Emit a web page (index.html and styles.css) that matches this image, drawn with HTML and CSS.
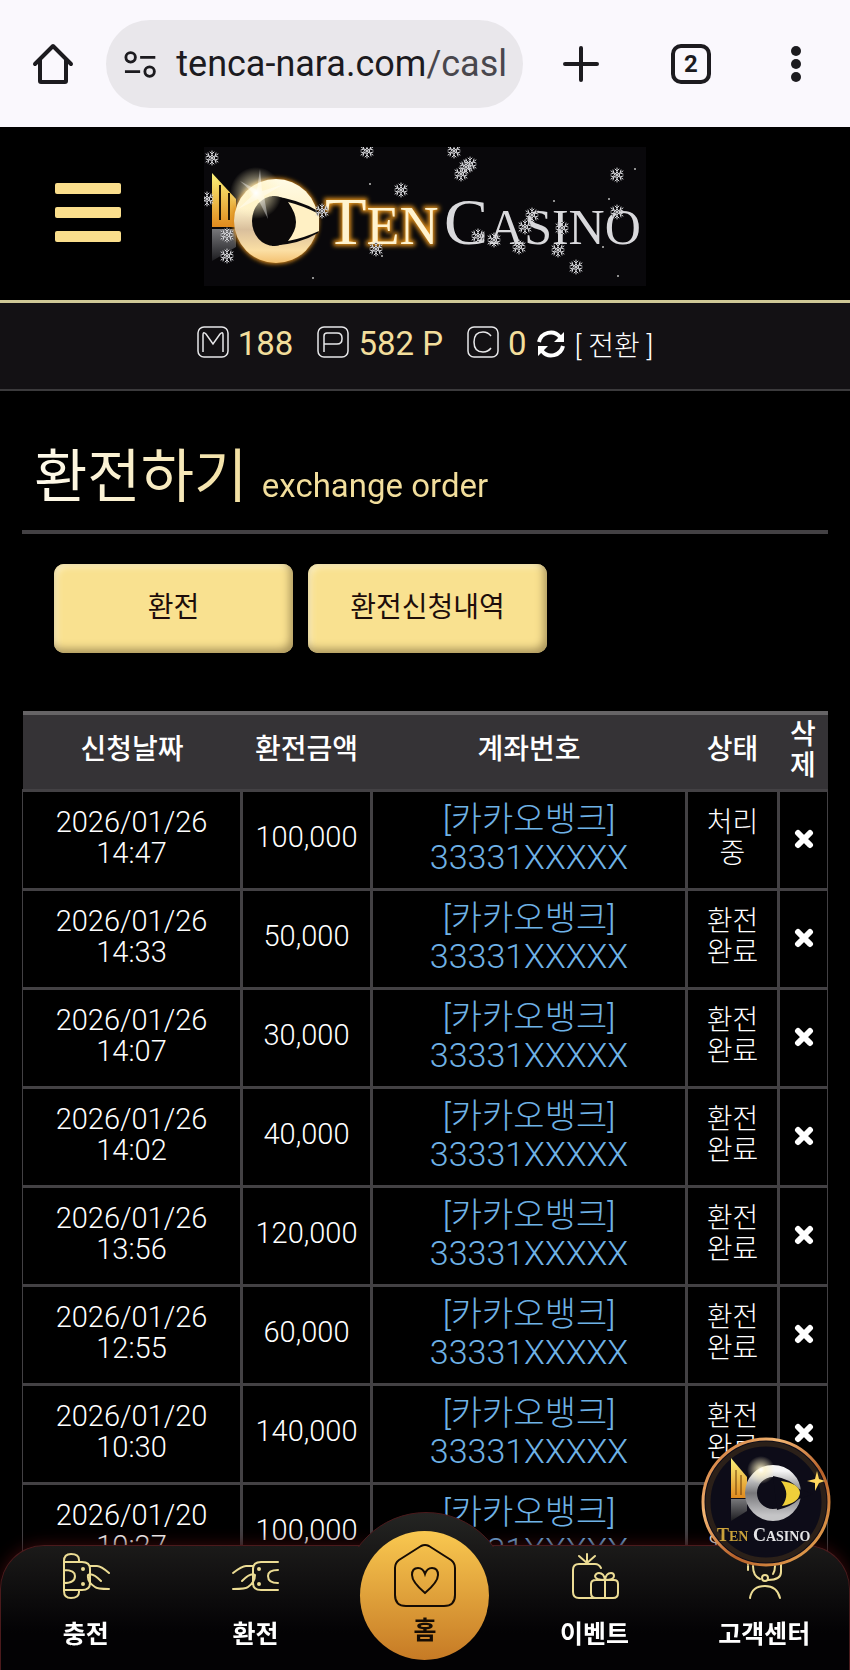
FILE: index.html
```html
<!DOCTYPE html>
<html lang="ko">
<head>
    <meta charset="UTF-8">
    <meta name="viewport" content="width=device-width, initial-scale=1.0">
    <title>환전하기</title>
    <link rel="stylesheet" href="styles.css">
</head>
<body>
    <svg class="defs" width="0" height="0" aria-hidden="true">
        <defs>
            <linearGradient id="gold" x1="0" y1="0" x2="0" y2="1">
                <stop offset="0" stop-color="#fbf27a"/>
                <stop offset="1" stop-color="#e08a1e"/>
            </linearGradient>
            <linearGradient id="ring" x1="0" y1="0" x2="0" y2="1">
                <stop offset="0" stop-color="#fffbe6"/>
                <stop offset="0.35" stop-color="#fff3cc"/>
                <stop offset="0.6" stop-color="#d9bf9c"/>
                <stop offset="0.85" stop-color="#fbdfa4"/>
                <stop offset="1" stop-color="#f3c070"/>
            </linearGradient>
            <linearGradient id="silver" x1="0" y1="0" x2="0" y2="1">
                <stop offset="0" stop-color="#f6f6f6"/>
                <stop offset="0.5" stop-color="#77777a"/>
                <stop offset="1" stop-color="#c4c4c6"/>
            </linearGradient>
            <linearGradient id="mirror" x1="0" y1="0" x2="0" y2="1">
                <stop offset="0" stop-color="#77777a"/>
                <stop offset="1" stop-color="#1c1c20"/>
            </linearGradient>
            <linearGradient id="badgeEdge" x1="0" y1="0" x2="1" y2="1">
                <stop offset="0" stop-color="#c2662a"/>
                <stop offset="0.3" stop-color="#f3b673"/>
                <stop offset="0.6" stop-color="#b8612a"/>
                <stop offset="1" stop-color="#f0b25a"/>
            </linearGradient>
            <radialGradient id="flare">
                <stop offset="0" stop-color="#fff"/>
                <stop offset="0.3" stop-color="#fff3c4" stop-opacity="0.7"/>
                <stop offset="1" stop-color="#fff3c4" stop-opacity="0"/>
            </radialGradient>
            <filter id="glow" x="-20%" y="-20%" width="140%" height="140%">
                <feGaussianBlur stdDeviation="2"/>
            </filter>
            <g id="flake" stroke="#d4d4d8" stroke-width="1" stroke-linecap="round">
                <path d="M0-7V7M-6-4L6 4M-6 4L6-4M-2-6L0-4L2-6M-2 6L0 4L2 6M-6-1L-3-2L-4-5M6-1L3-2L4-5M-6 1L-3 2L-4 5M6 1L3 2L4 5M-3 0L0-3L3 0L0 3Z"/>
            </g>
        </defs>
    </svg>

    <div class="browser-bar">
        <button class="bar-btn" type="button" aria-label="Home">
            <svg width="42" height="42" viewBox="0 0 42 42" fill="none" stroke="#1c1b1f" stroke-width="4" stroke-linejoin="round" stroke-linecap="round">
                <path d="M3 21L21 3L39 21M8 17V38Q8 39 9 39H33Q34 39 34 38V17"/>
            </svg>
        </button>
        <div class="address">
            <svg width="34" height="30" viewBox="0 0 34 30" fill="none" stroke="#1c1b1f" stroke-width="3">
                <circle cx="7" cy="8" r="5"/><path d="M17 8H33M1 23H17"/><circle cx="27" cy="23" r="5"/>
            </svg>
            <span class="url">tenca-nara.com<span class="path">/casl</span></span>
        </div>
        <button class="bar-btn new-tab" type="button" aria-label="New tab">
            <svg width="36" height="36" viewBox="0 0 36 36" stroke="#1c1b1f" stroke-width="4" stroke-linecap="round">
                <path d="M18 2V34M2 18H34"/>
            </svg>
        </button>
        <button class="bar-btn tabs" type="button">2</button>
        <button class="bar-btn" type="button" aria-label="Menu">
            <svg width="10" height="38" viewBox="0 0 10 38" fill="#1c1b1f">
                <circle cx="5" cy="6" r="5"/><circle cx="5" cy="19" r="5"/><circle cx="5" cy="32" r="5"/>
            </svg>
        </button>
    </div>

    <header class="header">
        <button class="menu-btn" type="button" aria-label="메뉴">
            <span></span><span></span><span></span>
        </button>
        <a class="logo" href="#">
            <svg viewBox="0 0 442 139" width="442" height="139">
                <rect width="442" height="139" fill="#09080b"/>
                <path d="M8 26L32 52V80H8Z" fill="url(#gold)"/>
                <path d="M16 38V73M25 46V73" stroke="#201404" stroke-width="2"/>
                <path d="M8 82H32V100L8 114Z" fill="url(#mirror)"/>
                <circle cx="72" cy="74" r="37" fill="none" stroke="#d88a1c" stroke-width="12" filter="url(#glow)"/>
                <circle cx="72" cy="74" r="42" fill="url(#ring)"/>
                <path d="M68 49Q94 52 114 64V86Q96 97 68 99Z" fill="#0b090a"/>
                <ellipse cx="70" cy="74" rx="22" ry="25" fill="#0b090a"/>
                <path d="M84 55Q100 59 115 67V84Q100 91 84 94Q92 84 92 75Q92 66 84 55Z" fill="#fff0c4"/>
                <circle cx="52" cy="46" r="26" fill="url(#flare)"/>
                <path d="M56 22L58 44L78 38L60 49L64 72L54 52L34 62L50 47L36 34L53 43Z" fill="#fff" opacity="0.4"/>
                <g class="logo-text">
                    <text class="ten-glow" x="121" y="97" font-size="68">T<tspan font-size="54">EN</tspan></text>
                    <text class="ten" x="121" y="97" font-size="68">T<tspan font-size="54">EN</tspan></text>
                    <text class="casino" x="240" y="97" font-size="66">C<tspan font-size="50">ASINO</tspan></text>
                </g>
                <use href="#flake" x="8" y="11"/><use href="#flake" x="163" y="4"/><use href="#flake" x="3" y="52"/>
                <use href="#flake" x="197" y="43"/><use href="#flake" x="118" y="64"/><use href="#flake" x="172" y="102"/>
                <use href="#flake" x="23" y="88"/><use href="#flake" x="23" y="109"/><use href="#flake" x="250" y="4"/>
                <use href="#flake" x="266" y="17"/><use href="#flake" x="257" y="27"/><use href="#flake" x="262" y="20"/>
                <use href="#flake" x="413" y="28"/><use href="#flake" x="274" y="89"/><use href="#flake" x="290" y="93"/>
                <use href="#flake" x="315" y="100"/><use href="#flake" x="321" y="80"/><use href="#flake" x="328" y="68"/>
                <use href="#flake" x="358" y="81"/><use href="#flake" x="354" y="103"/><use href="#flake" x="372" y="120"/>
                <use href="#flake" x="413" y="65"/>
                <g fill="#bbb">
                    <circle cx="431" cy="22" r="1"/><circle cx="350" cy="54" r="1"/><circle cx="414" cy="129" r="1"/>
                    <circle cx="109" cy="131" r="1"/><circle cx="178" cy="109" r="1"/><circle cx="405" cy="52" r="1"/>
                    <circle cx="166" cy="37" r="1"/><circle cx="399" cy="100" r="1"/>
                </g>
            </svg>
        </a>
    </header>

    <div class="wallet">
        <span class="coin">
            <svg width="32" height="32" viewBox="0 0 32 32"><rect x="1" y="1" width="30" height="30" rx="6"/><path d="M6 26V9Q6 5 9 8L16 18L23 8Q26 5 26 9V26"/></svg>
            <b>188</b>
        </span>
        <span class="coin">
            <svg width="32" height="32" viewBox="0 0 32 32"><rect x="1" y="1" width="30" height="30" rx="6"/><path d="M7 26V10Q7 7 10 7H20Q25 7 25 12V13Q25 18 20 18H7"/></svg>
            <b>582 P</b>
        </span>
        <span class="coin">
            <svg width="32" height="32" viewBox="0 0 32 32"><rect x="1" y="1" width="30" height="30" rx="6"/><path d="M24 10Q21 6 16 6Q7 6 7 16Q7 26 16 26Q21 26 24 22"/></svg>
            <b>0</b>
        </span>
        <button class="convert" type="button">
            <svg width="28" height="28" viewBox="0 0 28 28" fill="none" stroke="#fff" stroke-width="4">
                <path d="M2 12A12 12 0 0 1 23 7M26 16A12 12 0 0 1 5 21"/>
                <path d="M27 2V12H17ZM1 26V16H11Z" fill="#fff" stroke="none"/>
            </svg>
            [ 전환 ]
        </button>
    </div>

    <main class="content">
        <h1 class="title"><span class="title-text">환전하기 <small>exchange order</small></span></h1>

        <div class="actions">
            <button type="button">환전</button>
            <button type="button">환전신청내역</button>
        </div>

        <table class="history">
            <colgroup>
                <col class="c-date"><col class="c-money"><col class="c-bank"><col class="c-state"><col class="c-del">
            </colgroup>
            <thead>
                <tr><th>신청날짜</th><th>환전금액</th><th>계좌번호</th><th>상태</th><th>삭제</th></tr>
            </thead>
            <tbody id="rows"></tbody>
        </table>
    </main>

    <a class="badge" href="#" aria-label="TEN CASINO">
        <svg viewBox="0 0 130 130" width="130" height="130">
            <circle cx="65" cy="65" r="63" fill="#0d0c18" stroke="url(#badgeEdge)" stroke-width="3"/>
            <circle cx="65" cy="65" r="58" fill="none" stroke="#2b2019" stroke-width="5"/>
            <path d="M30 21L46 40V61H30Z" fill="url(#gold)"/>
            <path d="M35 33V58M40 38V58" stroke="#6b3a08" stroke-width="1"/>
            <path d="M30 62H46V74L30 84Z" fill="url(#mirror)"/>
            <circle cx="72" cy="56" r="22" fill="none" stroke="url(#silver)" stroke-width="12"/>
            <path d="M72 39Q90 42 98 52L112 57L98 62Q90 70 76 73Z" fill="#0d0c18"/>
            <path d="M80 44Q98 46 99 56Q98 66 81 69Q90 57 80 44Z" fill="#efcf3a"/>
            <circle cx="60" cy="33" r="14" fill="url(#flare)"/>
            <path d="M116 34L118 42L124 44L118 46L114 54L114 46L106 44L114 42Z" fill="#ffd75e"/>
            <text class="badge-text" x="16" y="104" font-size="18" fill="#c9a13a">T<tspan font-size="14">EN</tspan> <tspan fill="#e4e4e6">C</tspan><tspan font-size="14" fill="#e4e4e6">ASINO</tspan></text>
        </svg>
    </a>

    <nav class="bottom-nav">
        <a href="#">
            <svg class="nav-icon" viewBox="0 0 48 48">
                <path d="M17 10V8Q17 2 9 2Q2 2 2 9V39Q2 46 9 46Q17 46 17 40V38M2 10H20Q28 10 28 17V31Q28 38 20 38H2M2 18Q13 18 13 24Q13 31 2 31M28 14H35Q39 14 47 21M26 23Q30 20 39 29M26 23Q25 30 33 35Q35 37 47 37"/>
                <circle cx="21" cy="17" r="1"/><circle cx="21" cy="32" r="1"/>
            </svg>
            충전
        </a>
        <a href="#">
            <svg class="nav-icon" viewBox="0 0 48 48">
                <path d="M47 10H30Q22 10 22 17V31Q22 38 30 38H47M47 18Q37 18 37 24Q37 31 47 31M22 14H15Q11 14 2 21M24 23Q20 20 11 29M24 23Q24 30 17 35Q15 37 2 37"/>
                <circle cx="28" cy="17" r="1"/><circle cx="28" cy="32" r="1"/>
            </svg>
            환전
        </a>
        <a class="home" href="#">
            <span class="home-disc">
                <svg width="64" height="66" viewBox="0 0 64 66" fill="none" stroke="#160c04" stroke-width="2">
                    <path d="M28 3Q32 1 36 3L58 17Q62 20 62 25V52Q62 63 51 63H13Q2 63 2 52V25Q2 20 6 17Z"/>
                    <path d="M32 50Q19 39 19 32Q19 25 25 25Q30 25 32 31Q34 25 39 25Q45 25 45 32Q45 39 32 50Z"/>
                </svg>
                홈
            </span>
        </a>
        <a href="#">
            <svg class="nav-icon" viewBox="0 0 48 48">
                <path d="M30 16Q28 12 24 12H8Q2 12 2 18V40Q2 46 8 46H25M16 11V2M16 11L8 4M16 11L24 4M25 28H43Q47 28 47 32V41Q47 46 42 46H25Q20 46 20 41V32Q20 28 25 28ZM34 28V46M34 28Q24 28 24 24Q25 21 28 21Q33 21 34 28Q35 21 40 21Q43 21 43 24Q43 28 34 28"/>
            </svg>
            이벤트
        </a>
        <a href="#">
            <svg class="nav-icon" viewBox="0 0 48 48">
                <path d="M8 12Q12 2 24 2Q36 2 41 12V20Q41 28 28 28M13 14Q13 24 20 27M35 14Q35 19 33 22M8 14V18M10 46Q12 34 25 34Q37 34 40 46"/>
                <circle cx="25" cy="26" r="3"/>
            </svg>
            고객센터
        </a>
    </nav>

    <script>
        const orders = [
            ['2026/01/26 14:47', '100,000', '처리중'],
            ['2026/01/26 14:33', '50,000', '환전완료'],
            ['2026/01/26 14:07', '30,000', '환전완료'],
            ['2026/01/26 14:02', '40,000', '환전완료'],
            ['2026/01/26 13:56', '120,000', '환전완료'],
            ['2026/01/26 12:55', '60,000', '환전완료'],
            ['2026/01/20 10:30', '140,000', '환전완료'],
            ['2026/01/20 10:27', '100,000', '환전완료']
        ];

        document.getElementById('rows').innerHTML = orders.map(([date, money, state]) => `
            <tr>
                <td>${date.replace(' ', '<br>')}</td>
                <td>${money}</td>
                <td class="bank">[카카오뱅크]<br>33331XXXXX</td>
                <td class="state">${state.slice(0, 2)}<br>${state.slice(2)}</td>
                <td>
                    <button class="del" type="button" aria-label="삭제">
                        <svg width="20" height="20" viewBox="0 0 20 20" stroke="#fff" stroke-width="6" stroke-linecap="round">
                            <path d="M4 4L16 16M16 4L4 16"/>
                        </svg>
                    </button>
                </td>
            </tr>`).join('');
    </script>
</body>
</html>
```
FILE: styles.css
```css
* {
    box-sizing: border-box;
}
body {
    margin: 0;
    min-height: 100vh;
    background-color: #000;
    color: #fff;
    font-family: Roboto, "Noto Sans CJK KR", sans-serif;
    font-size: 26px;
}
button {
    padding: 0;
    border: none;
    background: none;
    color: inherit;
    font-family: inherit;
    cursor: pointer;
}
a {
    color: inherit;
    text-decoration: none;
}
svg {
    display: block;
}
.defs {
    position: absolute;
}

/* browser bar */
.browser-bar {
    display: flex;
    align-items: center;
    height: 127px;
    padding: 0 49px 0 32px;
    background-color: #faf8fd;
    color: #1c1b1f;
}
.address {
    display: flex;
    flex: 1;
    align-items: center;
    gap: 20px;
    height: 88px;
    margin: 0 40px 0 32px;
    padding: 0 16px 0 18px;
    border-radius: 44px;
    background-color: #e9e7eb;
    overflow: hidden;
}
.url {
    font-size: 36px;
    white-space: nowrap;
}
.path {
    color: #49474d;
}
.tabs {
    width: 40px;
    height: 40px;
    margin: 0 80px 0 72px;
    border: 4px solid #1c1b1f;
    border-radius: 10px;
    font-size: 24px;
    font-weight: 700;
    line-height: 32px;
}

/* header */
.header {
    display: grid;
    grid-template-columns: 1fr auto 1fr;
    align-items: center;
    height: 173px;
    padding-top: 6px;
}
.menu-btn {
    display: flex;
    flex-direction: column;
    gap: 13px;
    width: 66px;
    margin: 0 0 8px 55px;
}
.menu-btn span {
    height: 11px;
    border-radius: 2px;
    background-color: #fade8c;
}
.logo-text, .badge-text {
    font-family: "Liberation Serif", serif;
}
.badge-text {
    font-weight: 700;
}
.ten {
    fill: #fff3cf;
}
.ten-glow {
    fill: #e0901a;
    stroke: #e0901a;
    stroke-width: 4;
    filter: url(#glow);
}
.casino {
    fill: #d9d9dc;
}
.wallet {
    display: flex;
    align-items: center;
    justify-content: center;
    height: 91px;
    padding-bottom: 4px;
    border-top: 3px solid #cfc896;
    border-bottom: 2px solid #3b3a3c;
    background-color: #131114;
}
.coin {
    display: flex;
    align-items: center;
    gap: 9px;
    margin-right: 24px;
}
.coin svg {
    margin-bottom: 4px;
    fill: none;
    stroke: #e8e8ea;
    stroke-width: 1.5;
}
.coin b {
    color: #f2de9c;
    font-size: 33px;
    font-weight: 400;
    line-height: 40px;
}
.coin:nth-child(3) {
    margin-right: 10px;
}
.convert {
    display: flex;
    align-items: center;
    gap: 10px;
    font-size: 28px;
    font-weight: 300;
}

/* page */
.content {
    padding: 0 22px;
}
.title {
    margin: 0 0 30px;
    padding: 46px 12px 13px;
    border-bottom: 4px solid #434144;
    font-size: 58px;
    font-weight: 400;
    line-height: 80px;
}
.title-text {
    background: linear-gradient(to right, #fffbee, #f2de9c 50%);
    -webkit-background-clip: text;
    background-clip: text;
    color: transparent;
}
.title small {
    font-size: 33px;
    line-height: 40px;
}
.actions {
    display: flex;
    gap: 15px;
    margin: 0 0 58px;
    padding: 0 32px;
}
.actions button {
    width: 239px;
    height: 89px;
    padding-bottom: 8px;
    border-radius: 10px;
    background-color: #f9e190;
    box-shadow: inset -3px -4px 8px #a8935a, inset 3px 3px 6px #fdf1c4;
    color: #1d0d0a;
    font-size: 28px;
}
.history {
    width: 100%;
    border-collapse: collapse;
    table-layout: fixed;
    text-align: center;
}
.c-date {
    width: 219px;
}
.c-money {
    width: 130px;
}
.c-state {
    width: 92px;
}
.c-del {
    width: 49px;
}
.history th {
    height: 77px;
    padding: 0 8px 4px;
    border-top: 4px solid #666466;
    border-bottom: 2px solid #434144;
    background-color: #353336;
    font-size: 28px;
    font-weight: 500;
    line-height: 31px;
    word-break: break-all;
}
.history td {
    height: 99px;
    padding: 0 0 4px;
    border: 3px solid #434144;
    font-size: 29px;
    font-weight: 300;
    line-height: 31px;
}
.history td:first-child {
    border-left-width: 1px;
}
.history td:last-child {
    padding: 0;
    border-right-width: 1px;
}
.history .state {
    font-size: 28px;
}
.history .bank {
    color: #6fb2e6;
    font-size: 34px;
    line-height: 38px;
}
.del svg {
    margin: 0 auto;
}

/* floating menu */
.badge {
    position: fixed;
    right: 19px;
    bottom: 103px;
    z-index: 3;
}
.bottom-nav {
    position: fixed;
    left: 0;
    right: 0;
    bottom: 0;
    z-index: 2;
    display: grid;
    grid-template-columns: repeat(5, 1fr);
    height: 125px;
    border: 1px solid #4b1a1c;
    border-bottom: none;
    border-radius: 44px 44px 0 0;
    background: linear-gradient(#1b1a19, #030204 70%);
    box-shadow: 0 0 16px #3a0a0c;
}
/* bump around the home button, only the part above the bar is shown */
.bottom-nav::before {
    content: "";
    position: absolute;
    left: 50%;
    bottom: -10px;
    width: 166px;
    height: 166px;
    margin-left: -83px;
    border: 1px solid #4b1a1c;
    border-radius: 50%;
    background: linear-gradient(#242523, #1b1a19 20%);
    clip-path: inset(0 0 133px 0);
}
.bottom-nav a {
    display: flex;
    flex-direction: column;
    align-items: center;
    gap: 17px;
    padding-top: 6px;
    font-size: 25px;
    font-weight: 700;
    line-height: 36px;
}
.nav-icon {
    width: 48px;
    height: 48px;
    fill: none;
    stroke: #ecdc94;
    stroke-width: 2;
    stroke-linecap: round;
    stroke-linejoin: round;
}
.bottom-nav .home {
    position: relative;
    padding: 0;
}
.home-disc {
    position: absolute;
    bottom: 10px;
    display: flex;
    flex-direction: column;
    align-items: center;
    gap: 4px;
    width: 129px;
    height: 129px;
    padding-top: 12px;
    border-radius: 50%;
    background: linear-gradient(#f9c850, #c67a25);
    color: #160c04;
}
```
